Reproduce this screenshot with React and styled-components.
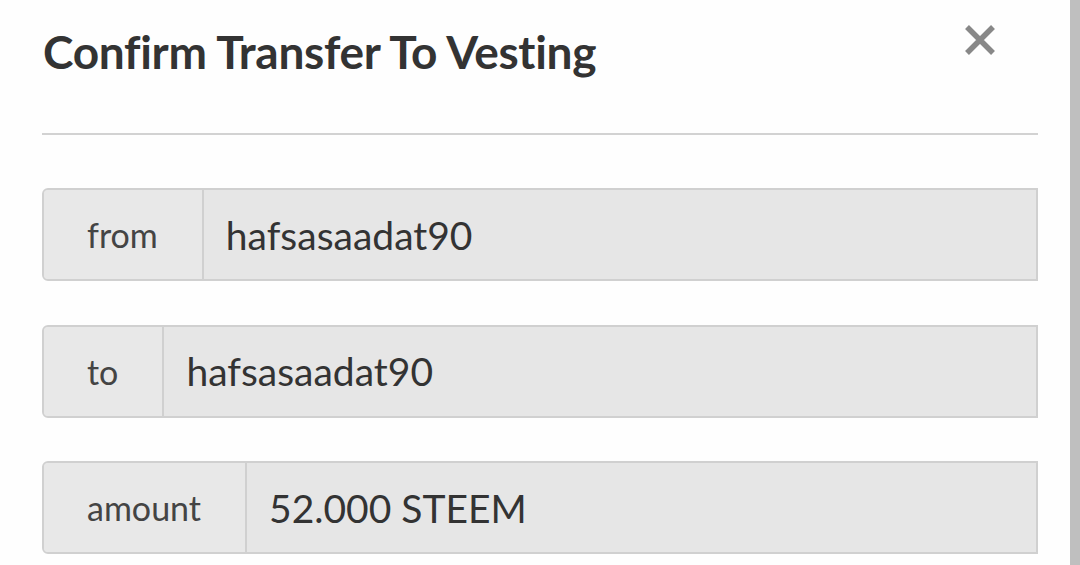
import React from 'react';
import styled, { createGlobalStyle } from 'styled-components';

const GlobalStyle = createGlobalStyle`
  html, body {
    margin: 0;
    padding: 0;
    background: #fefefe;
  }
  body {
    font-family: Lato, "Open Sans", sans-serif;
  }
`;

const fields = [
  { label: 'from', value: 'hafsasaadat90' },
  { label: 'to', value: 'hafsasaadat90' },
  { label: 'amount', value: '52.000 STEEM' },
];

const Page = styled.div`
  display: flex;
  width: 1080px;
  height: 565px;
  overflow: hidden;
`;

const Modal = styled.div`
  flex: 1;
  background: #fefefe;
  padding: 0 32px 0 42px;
`;

const Scrollbar = styled.div`
  width: 10px;
  background: #bfbfbf;
`;

const Header = styled.div`
  display: flex;
  justify-content: space-between;
  align-items: flex-start;
  height: 133px;
  border-bottom: 2px solid #d2d2d2;
`;

const Title = styled.h1`
  margin: 22px 0 0 1px;
  font-family: Lato, sans-serif;
  font-weight: 700;
  font-size: 46px;
  line-height: 60px;
  color: #333;
  letter-spacing: -0.3px;
`;

const CloseButton = styled.button`
  border: 0;
  background: none;
  padding: 0;
  margin: 24px 42px 0 0;
  width: 32px;
  height: 32px;
  cursor: pointer;
`;

const Form = styled.div`
  display: flex;
  flex-direction: column;
  gap: 43.5px;
  padding-top: 53px;
`;

const Row = styled.div`
  display: flex;
  height: 93px;
  box-sizing: border-box;
  border: 2px solid #d0d0d0;
  border-radius: 6px 0 0 6px;
  background: #e6e6e6;
  overflow: hidden;
`;

const Label = styled.div`
  display: flex;
  align-items: center;
  padding: 0 44px 0 43px;
  border-right: 2px solid #d0d0d0;
  background: #e8e8e8;
  font-size: 34px;
  color: #444;
`;

const Value = styled.div`
  display: flex;
  align-items: center;
  padding-left: 22px;
  font-size: 39px;
  color: #333;
`;

function CloseIcon() {
  return (
    <svg width="32" height="32" viewBox="0 0 32 32">
      <path d="M3 3 L29 29 M29 3 L3 29" stroke="#888" strokeWidth="5.5" />
    </svg>
  );
}

export default function App() {
  return (
    <Page>
      <GlobalStyle />
      <Modal>
        <Header>
          <Title>Confirm Transfer To Vesting</Title>
          <CloseButton aria-label='close'>
            <CloseIcon />
          </CloseButton>
        </Header>
        <Form>
          {fields.map((f) => (
            <Row key={f.label}>
              <Label>{f.label}</Label>
              <Value>{f.value}</Value>
            </Row>
          ))}
        </Form>
      </Modal>
      <Scrollbar />
    </Page>
  );
}
